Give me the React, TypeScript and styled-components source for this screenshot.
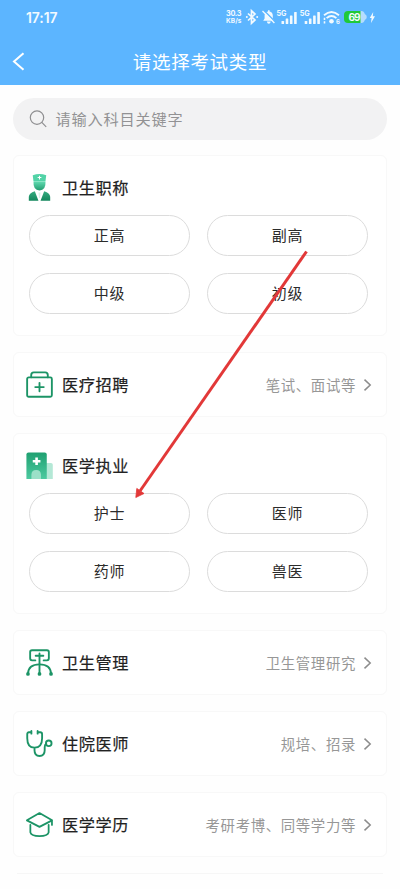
import React from 'react';
import styled, { createGlobalStyle } from 'styled-components';

const GlobalStyle = createGlobalStyle`
  * { box-sizing: border-box; }
  body {
    margin: 0;
    background: #fefefe;
    font-family: "Noto Sans CJK SC", "Noto Sans", sans-serif;
    color: #222;
  }
`;

const Screen = styled.div`
  position: relative;
  width: 400px;
  height: 889px;
  overflow: hidden;
  background: #fefefe;
`;

const Header = styled.header`
  height: 85px;
  background: #5cb5ff;
  color: #fff;
`;

const StatusBar = styled.div`
  display: flex;
  align-items: center;
  justify-content: space-between;
  height: 34px;
  padding: 0 24px 0 26px;
  font-family: Inter, sans-serif;
  color: #f2faff;
`;

const Clock = styled.span`
  font-size: 14px;
  font-weight: 600;
  letter-spacing: -0.1px;
`;

const StatusIcons = styled.svg`
  display: block;
  width: 150px;
  height: 18px;
  text { font-family: Inter, sans-serif; font-weight: 700; }
`;

const NavBar = styled.div`
  display: grid;
  grid-template-columns: 40px 1fr 40px;
  align-items: center;
  height: 55px;
`;

const BackIcon = styled.svg`
  display: block;
  margin-left: 12px;
`;

const NavTitle = styled.h1`
  margin: 0;
  padding-bottom: 1px;
  font-size: 18.5px;
  line-height: 27px;
  letter-spacing: 0.7px;
  font-weight: 400;
  text-align: center;
`;

const Content = styled.main`
  display: flex;
  flex-direction: column;
  gap: 16px;
  padding: 13px 13px 0;
`;

const SearchBox = styled.div`
  display: flex;
  align-items: center;
  gap: 8.5px;
  height: 42px;
  margin-bottom: -1px;
  padding: 0 0 0 16px;
  border-radius: 21px;
  background: #f2f2f3;
`;

const Placeholder = styled.span`
  padding-bottom: 2px;
  color: #929294;
  font-size: 15.2px;
  letter-spacing: 0.8px;
`;

const Card = styled.section<{ $tall?: boolean }>`
  flex: none;
  height: ${p => (p.$tall ? 181 : 65)}px;
  padding: 0 14px 0 12px;
  border: 1px solid #f8f8f8;
  border-radius: 6px;
  background: #fff;
`;

const NextCardEdge = styled.div`
  height: 1px;
  margin: 0 4px;
  background: #f6f6f6;
`;

const CardHead = styled.div`
  display: flex;
  align-items: center;
  height: 63px;
`;

const CardIcon = styled.svg`
  display: block;
  flex: none;
  width: 27px;
  height: 27px;
  margin-right: 9px;
`;

const CardTitle = styled.h2`
  flex: 1;
  margin: 0;
  padding-bottom: 2px;
  font-size: 16.2px;
  line-height: 24px;
  letter-spacing: 0.6px;
  font-weight: 400;
  -webkit-text-stroke: 0.2px currentColor;
`;

const Detail = styled.span`
  padding-bottom: 1px;
  color: #979797;
  font-size: 14.4px;
  letter-spacing: 0.65px;
`;

const Chevron = styled.svg`
  display: block;
  margin: 0 0 0 7px;
`;

const PillGrid = styled.div`
  display: grid;
  grid-template-columns: 161px 161px;
  grid-auto-rows: 41px;
  gap: 17px;
  margin: -4px 0 0 3px;
`;

const Pill = styled.button`
  padding: 0 0 2px;
  border: 1px solid #dcdcdc;
  border-radius: 21px;
  background: #fff;
  color: #2b2b2b;
  font: inherit;
  font-size: 15px;
  letter-spacing: 0.7px;
`;

const Pointer = styled.svg`
  position: absolute;
  left: 0;
  top: 0;
  pointer-events: none;
`;

const GREEN = '#1c9466';

const SignalBars = ({ x }: { x: number }) => (
  <g>
    <text x={x - 5} y="8" fontSize="7.2">5G</text>
    <rect x={x} y="13" width="2.6" height="3" rx=".6" />
    <rect x={x + 4.2} y="10.5" width="2.6" height="5.5" rx=".6" />
    <rect x={x + 8.4} y="7.5" width="2.6" height="8.5" rx=".6" />
    <rect x={x + 12.6} y="4" width="2.6" height="12" rx=".6" />
  </g>
);

const icons: Record<string, React.ReactNode> = {
  nurse: (
    <>
      <defs>
        <linearGradient id="nurse" x1="0" y1="0" x2="0" y2="1">
          <stop offset="0" stopColor="#62dcb2" />
          <stop offset="1" stopColor="#209a6e" />
        </linearGradient>
        <linearGradient id="coat" x1="0" y1="0" x2="0" y2="1">
          <stop offset="0" stopColor="#36ac80" />
          <stop offset="1" stopColor="#13865c" />
        </linearGradient>
      </defs>
      <path d="M6.5 1.2Q13 -1 19.5 1.2L18.8 6.7H7.2Z" fill="#52d3a7" />
      <path d="M7.2 7.1H18.8Q19.3 15.8 13 16Q6.7 15.8 7.2 7.1Z" fill="url(#nurse)" />
      <path d="M8.5 16.5L12 25.8H2.7V22Q3 18 8.5 16.5ZM17.5 16.5L14 25.8H23.3V22Q23 18 17.5 16.5Z" fill="url(#coat)" />
      <path d="M13 1.6V5.2M11.2 3.4H14.8" stroke="#fff" strokeWidth="1" />
      <path d="M12 17.8H14L13.5 23H12.5Z" fill="#d8f2e8" />
    </>
  ),
  kit: (
    <g fill="none" stroke={GREEN} strokeWidth="1.8" strokeLinejoin="round" strokeLinecap="round">
      <rect x="1.1" y="6.2" width="23.8" height="18.6" rx="1.5" />
      <path d="M5 6V4Q5 1.3 7.5 1.3H18.5Q21 1.3 21 4V6M13 11.4V19.6M8.9 15.5H17.1" />
    </g>
  ),
  hospital: (
    <>
      <defs>
        <linearGradient id="tower" x1="0" y1="0" x2="0" y2="1">
          <stop offset="0" stopColor="#1fa071" />
          <stop offset="1" stopColor="#4dcaa0" />
        </linearGradient>
      </defs>
      <path d="M18 10.5H24Q25.8 10.5 25.8 12.3V26H18Z" fill="#b4e8d6" />
      <path d="M.4 26V2.4Q.4 .4 2.4 .4H18Q20 .4 20 2.4V26Z" fill="url(#tower)" />
      <path d="M5.2 26V22Q5.2 17.4 9.8 17.4Q14.4 17.4 14.4 22V26Z" fill="#9be0c8" />
      <path d="M10.2 5.2V12.6M6.5 8.9H13.9" stroke="#fff" strokeWidth="2.5" />
    </>
  ),
  management: (
    <g fill="none" stroke={GREEN} strokeWidth="1.8" strokeLinecap="round" strokeLinejoin="round">
      <path d="M9 11H5.8Q4 11 4 9V3Q4 1.2 5.8 1.2H20.2Q22 1.2 22 3V9Q22 11 20.2 11H17M9.3 6.5H16.7M13 4.3V24" />
      <path d="M1.8 24Q2.2 14.8 13 14.8Q23.8 14.8 24.2 24" />
      <g fill={GREEN} stroke="none">
        <circle cx="1.9" cy="24" r="1.8" /><circle cx="13" cy="24" r="1.8" /><circle cx="24.1" cy="24" r="1.8" />
      </g>
    </g>
  ),
  stethoscope: (
    <g fill="none" stroke={GREEN} strokeWidth="1.8" strokeLinecap="round" strokeLinejoin="round">
      <path d="M5.2 1V3.5M11.2 1V3.5M5.2 2.2H2.8Q1.2 2.2 1.2 4V8Q1.2 17 8.2 17Q15.5 17 15.5 8V4Q15.5 2.2 13.7 2.2H11.2M8.2 17V19.5Q8.2 25 13 25Q18 25 18 19.5V16.5Q18 14 19.5 13.3" />
      <circle cx="21.9" cy="12.8" r="2.7" />
    </g>
  ),
  graduation: (
    <g fill="none" stroke={GREEN} strokeWidth="1.7" strokeLinecap="round" strokeLinejoin="round">
      <path d="M.9 9L13 2L25.1 9L13 15.3ZM25 9V13.4" />
      <path d="M4.2 13.3V20.6Q5 24.2 13 24.2Q21 24.2 21.8 20.6V13.3" />
    </g>
  ),
};

interface Category {
  icon: string;
  title: string;
  options?: string[];
  detail?: string;
}

const categories: Category[] = [
  { icon: 'nurse', title: '卫生职称', options: ['正高', '副高', '中级', '初级'] },
  { icon: 'kit', title: '医疗招聘', detail: '笔试、面试等' },
  { icon: 'hospital', title: '医学执业', options: ['护士', '医师', '药师', '兽医'] },
  { icon: 'management', title: '卫生管理', detail: '卫生管理研究' },
  { icon: 'stethoscope', title: '住院医师', detail: '规培、招录' },
  { icon: 'graduation', title: '医学学历', detail: '考研考博、同等学力等' },
];

const CategoryCard = ({ icon, title, options, detail }: Category) => (
  <Card $tall={!!options}>
    <CardHead>
      <CardIcon viewBox="0 0 26 26">{icons[icon]}</CardIcon>
      <CardTitle>{title}</CardTitle>
      {detail && (
        <>
          <Detail>{detail}</Detail>
          <Chevron width="9" height="14" viewBox="0 0 9 14">
            <path d="M1.5 1.6L7.2 7L1.5 12.4" fill="none" stroke="#8c8c8c" strokeWidth="1.5" />
          </Chevron>
        </>
      )}
    </CardHead>
    {options && <PillGrid>{options.map(o => <Pill key={o}>{o}</Pill>)}</PillGrid>}
  </Card>
);

export default function App() {
  return (
    <Screen>
      <GlobalStyle />
      <Header>
        <StatusBar>
          <Clock>17:17</Clock>
          <StatusIcons viewBox="0 0 150 18" fill="currentColor">
            <text x="0" y="7.6" fontSize="7.3" textLength="15.5">30.3</text>
            <text x="0" y="15.2" fontSize="6.5" textLength="15.5">KB/s</text>
            <g fill="none" stroke="currentColor" strokeWidth="1.7">
              <path d="M22 5.5L29 12L25.5 15.2V2.8L29 6L22 12.5" />
            </g>
            <circle cx="20.8" cy="9" r="1" /><circle cx="31.2" cy="9" r="1" />
            <path d="M37.2 12.8L38.6 10.5V7.5Q38.8 4 42 3.4V2.2H43.6V3.4Q46.6 4 46.8 7.5V10.5L48.4 12.8ZM40.8 13.6H44.8Q44.3 15.8 42.8 15.8Q41.3 15.8 40.8 13.6Z" />
            <path d="M37.8 2.2L49.2 13.8" stroke="#5cb5ff" strokeWidth="1.4" />
            <path d="M36.5 3L48.4 15" stroke="currentColor" strokeWidth="1.3" />
            <SignalBars x={55.5} />
            <SignalBars x={78.7} />
            <g fill="none" stroke="currentColor" strokeWidth="1.8">
              <path d="M98 7.3Q105.5 .8 113 7.3M100.6 10.2Q105.5 5.8 110.4 10.2" />
            </g>
            <circle cx="105.5" cy="13.2" r="2.3" />
            <path d="M98.5 9.8V12M98.5 13.2V15.4" fill="none" stroke="currentColor" strokeWidth="1.6" />
            <text x="110" y="16" fontSize="6">6</text>
            <path d="M122 3H135V15H122Q118 15 118 11V7Q118 3 122 3Z" fill="#20c938" />
            <path d="M134.5 3H135.5Q138 3 138.8 6Q140.8 7 140.8 9Q140.8 11 138.8 12Q138 15 135.5 15H134.5Z" fill="#b5ddff" />
            <text x="122.6" y="12.7" fontSize="10" textLength="11.8">69</text>
            <path d="M147.2 4L143.8 10H145.6L145 15L149 8.2H146.8Z" />
          </StatusIcons>
        </StatusBar>
        <NavBar>
          <BackIcon width="13" height="19" viewBox="0 0 13 19">
            <path d="M11.5 1.2L2 9.5L11.5 17.8" fill="none" stroke="#fff" strokeWidth="2" />
          </BackIcon>
          <NavTitle>请选择考试类型</NavTitle>
        </NavBar>
      </Header>
      <Content>
        <SearchBox>
          <svg width="18" height="18" viewBox="0 0 18 18" fill="none" stroke="#8e8e90" strokeWidth="1.2">
            <circle cx="8" cy="7.6" r="6.7" />
            <path d="M12.8 12.4L17.2 16.8" />
          </svg>
          <Placeholder>请输入科目关键字</Placeholder>
        </SearchBox>
        {categories.map(c => <CategoryCard key={c.title} {...c} />)}
        <NextCardEdge />
      </Content>
      <Pointer width="400" height="889" viewBox="0 0 400 889">
        <path d="M306.5 251.5L140 491" stroke="#e23838" strokeWidth="3" />
        <path d="M135.8 497.5L136.8 488.4L144 493.5Z" fill="#e23838" stroke="#e23838" strokeWidth=".8" />
      </Pointer>
    </Screen>
  );
}
